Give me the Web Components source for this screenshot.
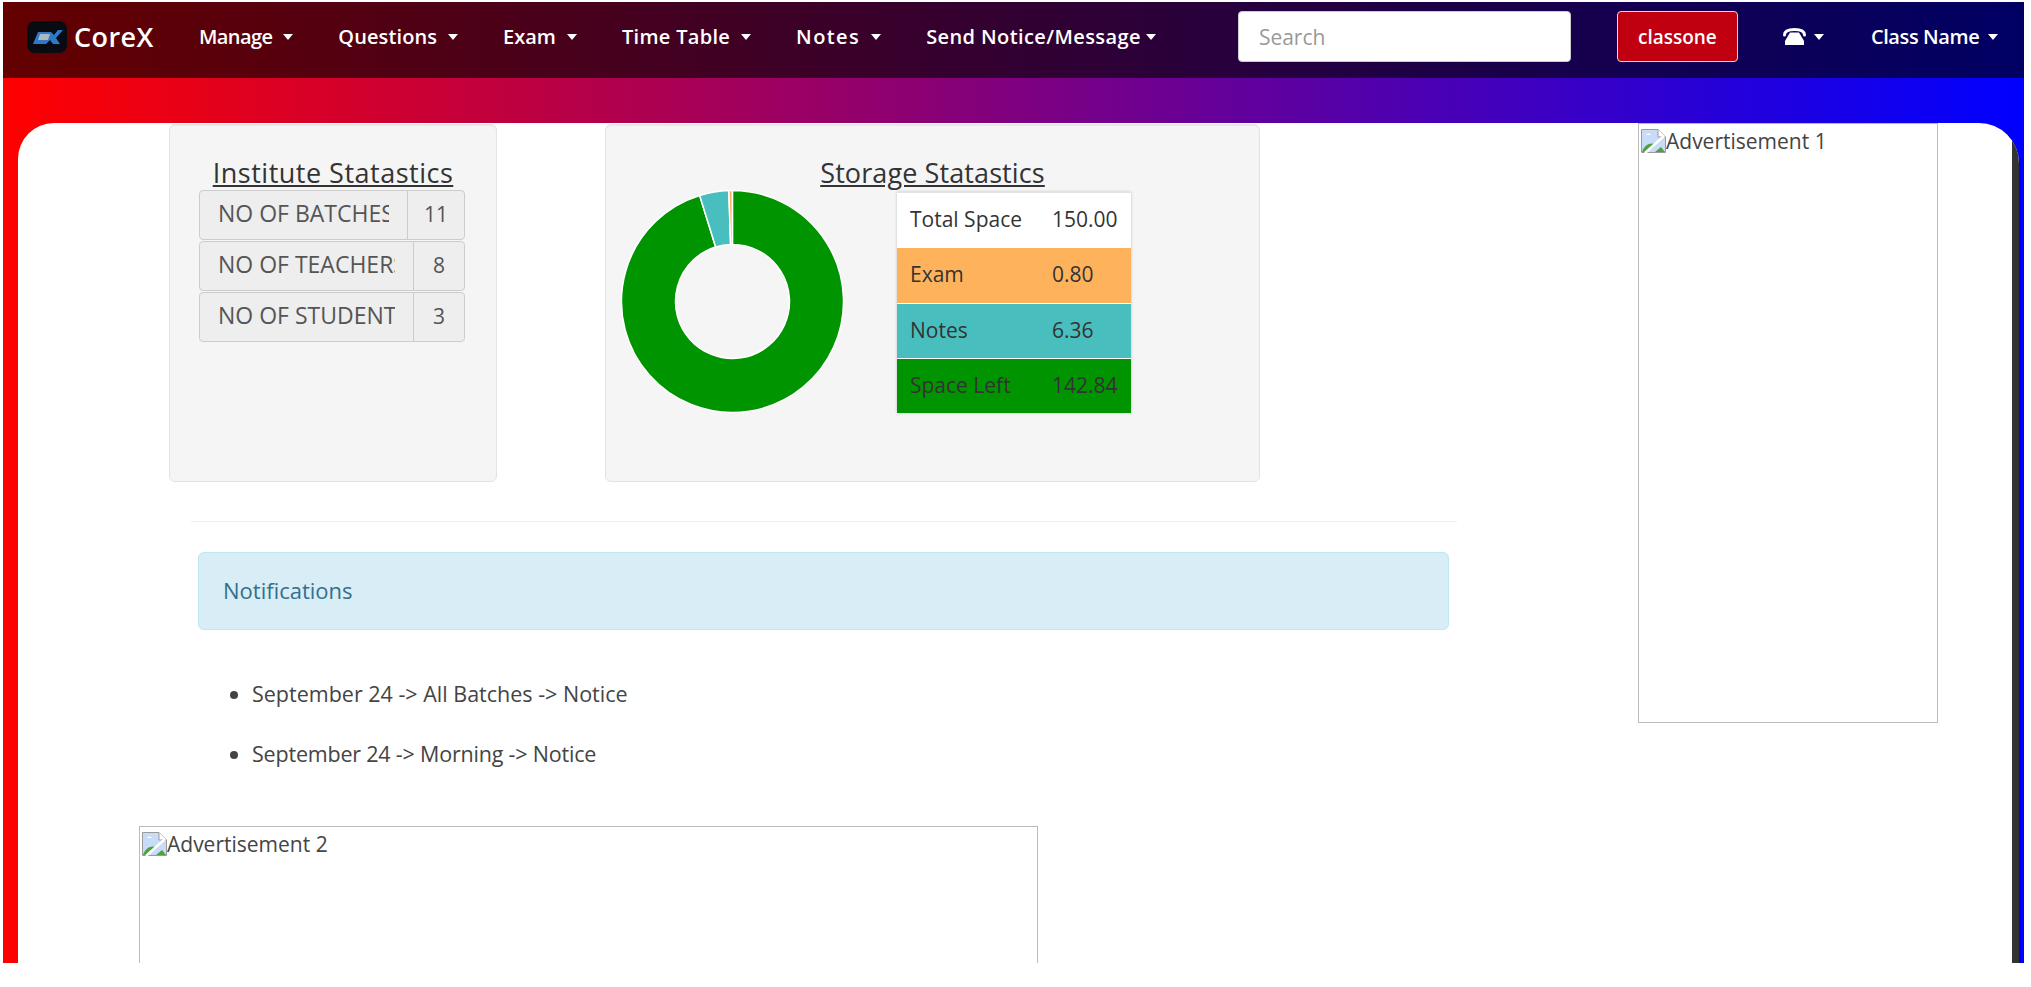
<!DOCTYPE html>
<html>
<head>
<meta charset="utf-8">
<title>CoreX</title>
<style>
html, body { margin: 0; height: 100%; background: #fff; overflow: hidden; }
body { padding: 2px 0 0 3px; box-sizing: border-box; font-family: "Open Sans", "Liberation Sans", sans-serif; color: #333; }
</style>
</head>
<body>
<app-shell>
  <top-nav slot="nav">
    <nav-item style="letter-spacing:-.6px">Manage</nav-item>
    <nav-item style="letter-spacing:.1px">Questions</nav-item>
    <nav-item>Exam</nav-item>
    <nav-item style="letter-spacing:.3px">Time Table</nav-item>
    <nav-item style="letter-spacing:1.4px">Notes</nav-item>
    <nav-item tight style="letter-spacing:.4px">Send Notice/Message</nav-item>
  </top-nav>

  <stat-card heading="Institute Statastics" style="--card-w:328px;--head-ls:.5px">
    <stat-row label="NO OF BATCHES" value="11" side="57"></stat-row>
    <stat-row label="NO OF TEACHERS" value="8" side="51"></stat-row>
    <stat-row label="NO OF STUDENTS" value="3" side="51"></stat-row>
  </stat-card>

  <stat-card slot="storage" heading="Storage Statastics" style="--card-w:655px;--head-ls:.1px">
    <storage-panel></storage-panel>
  </stat-card>

  <alert-box slot="below">Notifications</alert-box>
  <notice-list slot="below">
    <li>September 24 -&gt; All Batches -&gt; Notice</li>
    <li style="letter-spacing:-.2px">September 24 -&gt; Morning -&gt; Notice</li>
  </notice-list>
  <ad-box slot="below" label="Advertisement 2" style="--ad-w:899px;--ad-h:300px;--ad-ml:-59px"></ad-box>

  <ad-box slot="side" label="Advertisement 1" style="--ad-w:300px;--ad-h:600px"></ad-box>
</app-shell>

<script>
// page frame: gradient band with the white rounded panel on it
class AppShell extends HTMLElement {
  constructor() {
    super();
    this.attachShadow({mode: 'open'}).innerHTML = `
    <style>
    :host { display: block; width: 2021px; height: 961px; background: linear-gradient(to right, #f00, #00f); }
    .band { padding: 45px 5px 0 15px; height: 838px; }
    .panel { background: #fff; height: 840px; border-radius: 36px 40px 0 0; overflow: hidden; display: flex; }
    .main { width: 1487px; flex: none; padding-top: 1px; box-sizing: border-box; }
    .cards { display: flex; gap: 108px; padding-left: 151px; }
    hr { border: 0; border-top: 1px solid #eee; margin: 39px 0 30px 173px; width: 1266px; }
    .below { padding-left: 180px; }
    .side { margin-left: 133px; }
    .bar { margin-left: auto; width: 7px; background: #333; }
    </style>
    <slot name="nav"></slot>
    <div class="band">
      <div class="panel">
        <div class="main">
          <div class="cards"><slot></slot><slot name="storage"></slot></div>
          <hr>
          <div class="below"><slot name="below"></slot></div>
        </div>
        <div class="side"><slot name="side"></slot></div>
        <div class="bar"></div>
      </div>
    </div>`;
  }
}
customElements.define('app-shell', AppShell);

class TopNav extends HTMLElement {
  constructor() {
    super();
    this.attachShadow({mode: 'open'}).innerHTML = `
    <style>
    :host { display: flex; align-items: center; height: 76px; box-sizing: border-box; padding-bottom: 7px; background: linear-gradient(to right, #640000, #000064); color: #fff; font-size: 20px; font-weight: 600; }
    .brand { display: flex; align-items: center; gap: 7px; margin-left: 24px; font-size: 27px; letter-spacing: .4px; width: 172px; }
    .logo { width: 40px; height: 32px; }
    .items { display: flex; gap: 45px; }
    input { width: 333px; height: 51px; box-sizing: border-box; margin-left: 82px; border: 1px solid #ccc; border-radius: 4px; padding: 0 20px; font: inherit; font-size: 21px; font-weight: 400; background: #fff; }
    input::placeholder { color: #999; opacity: 1; }
    .btn { width: 121px; height: 51px; box-sizing: border-box; margin-left: 46px; display: flex; align-items: center; justify-content: center; background: #c00010; border: 1px solid #d9d9d9; border-radius: 4px; font-size: 19px; }
    .phone { margin-left: 45px; width: 88px; display: flex; align-items: center; gap: 8px; }
    .right { display: flex; align-items: center; gap: 9px; letter-spacing: -.4px; }
    .caret { width: 0; height: 0; border: 5px solid transparent; border-top: 6px solid #fff; border-bottom: 0; }
    </style>
    <div class="brand">
      <svg class="logo" viewBox="0 0 40 32">
        <rect width="40" height="32" rx="8" fill="#080b12"/>
        <path d="M6 23 L11 11 H24 L27 14 L31 9 H36 L29 17 L33 23 H26 L23 19 L19 23 Z" fill="#2f79c8"/>
        <path d="M13 13 H23 L21 19 H11 Z" fill="#aeb6c0"/>
      </svg>
      CoreX
    </div>
    <div class="items"><slot></slot></div>
    <input placeholder="Search" readonly>
    <div class="btn">classone</div>
    <div class="phone">
      <svg width="23" height="17" viewBox="0 0 23 17">
        <path d="M1.5 7 C1.5 2.5 6 1.5 11.5 1.5 C17 1.5 21.5 2.5 21.5 7" fill="none" stroke="#fff" stroke-width="3" stroke-linecap="round"/>
        <path d="M7 4.5 H16 L21 13 V17 H2 V13 Z" fill="#fff"/>
      </svg>
      <span class="caret"></span>
    </div>
    <div class="right">Class Name <span class="caret"></span></div>`;
  }
}
customElements.define('top-nav', TopNav);

class NavItem extends HTMLElement {
  constructor() {
    super();
    const gap = this.hasAttribute('tight') ? 5 : 11;
    this.attachShadow({mode: 'open'}).innerHTML = `
    <style>
    :host { display: flex; align-items: center; gap: ${gap}px; white-space: nowrap; }
    .caret { width: 0; height: 0; border: 5px solid transparent; border-top: 6px solid #fff; border-bottom: 0; }
    </style>
    <slot></slot><span class="caret"></span>`;
  }
}
customElements.define('nav-item', NavItem);

class StatCard extends HTMLElement {
  constructor() {
    super();
    this.attachShadow({mode: 'open'}).innerHTML = `
    <style>
    :host { display: block; width: var(--card-w); height: 358px; box-sizing: border-box; background: #f5f5f5; border: 1px solid #e3e3e3; border-radius: 6px; box-shadow: inset 0 1px 1px rgba(0,0,0,.05); padding: 32px 0 0; }
    h3 { margin: 0 0 2px; height: 31px; line-height: 31px; text-align: center; font-size: 27px; letter-spacing: var(--head-ls); font-weight: 400; text-decoration: underline; color: #333; }
    </style>
    <h3></h3>
    <slot></slot>`;
    this.shadowRoot.querySelector('h3').textContent = this.getAttribute('heading');
  }
}
customElements.define('stat-card', StatCard);

class StatRow extends HTMLElement {
  constructor() {
    super();
    this.attachShadow({mode: 'open'}).innerHTML = `
    <style>
    :host { display: flex; width: 266px; height: 50px; margin: 0 0 1px 29px; box-sizing: border-box; border: 1px solid #ccc; border-radius: 4px; background: #eee; color: #555; font-size: 23px; }
    .label { flex: 1; min-width: 0; margin: 0 18px; overflow: hidden; white-space: nowrap; line-height: 44px; }
    .value { border-left: 1px solid #ccc; display: flex; align-items: center; justify-content: center; box-sizing: border-box; font-size: 21px; padding-bottom: 2px; }
    </style>
    <div class="label"></div>
    <div class="value"></div>`;
    this.shadowRoot.querySelector('.label').textContent = this.getAttribute('label');
    const v = this.shadowRoot.querySelector('.value');
    v.textContent = this.getAttribute('value');
    v.style.width = this.getAttribute('side') + 'px';
  }
}
customElements.define('stat-row', StatRow);

class StoragePanel extends HTMLElement {
  constructor() {
    super();
    // angles in degrees, clockwise from the top
    const seg = (a, b, c) => {
      const p = (r, d) => {
        const t = (d - 90) * Math.PI / 180;
        return (111.5 + r * Math.cos(t)).toFixed(2) + ' ' + (111.5 + r * Math.sin(t)).toFixed(2);
      };
      const big = b - a > 180 ? 1 : 0;
      return `<path d="M${p(111,a)} A111 111 0 ${big} 1 ${p(111,b)} L${p(57,b)} A57 57 0 ${big} 0 ${p(57,a)} Z" fill="${c}" stroke="#fff" stroke-width="1.5"/>`;
    };
    this.attachShadow({mode: 'open'}).innerHTML = `
    <style>
    :host { display: flex; padding-left: 15px; }
    svg { width: 223px; height: 223px; flex: none; }
    .table { margin: 2px 0 0 53px; width: 234px; height: 221px; background: #fff; box-shadow: 0 0 3px rgba(0,0,0,.2); font-size: 21px; display: grid; grid-auto-rows: 1fr; row-gap: 1px; border-top: 1px solid #e4e4e4; box-sizing: border-box; }
    .r { display: grid; grid-template-columns: 142px 1fr; align-items: center; padding: 0 0 2px 13px; white-space: nowrap; }
    </style>
    <svg viewBox="0 0 223 223">${seg(0, 342.8, '#009400')}${seg(342.8, 358.1, '#48bfbe')}${seg(358.1, 359.9, '#ffb25c')}</svg>
    <div class="table">
      <div class="r" style="background:#fff"><span>Total Space</span><span>150.00</span></div>
      <div class="r" style="background:#ffb25c"><span>Exam</span><span>0.80</span></div>
      <div class="r" style="background:#48bfbe"><span>Notes</span><span>6.36</span></div>
      <div class="r" style="background:#009400"><span>Space Left</span><span>142.84</span></div>
    </div>`;
  }
}
customElements.define('storage-panel', StoragePanel);

class AlertBox extends HTMLElement {
  constructor() {
    super();
    this.attachShadow({mode: 'open'}).innerHTML = `
    <style>
    :host { display: flex; align-items: center; width: 1251px; height: 78px; box-sizing: border-box; padding: 0 0 2px 24px; background: #d9edf7; border: 1px solid #bce8f1; border-radius: 6px; color: #31708f; font-size: 22px; }
    </style>
    <slot></slot>`;
  }
}
customElements.define('alert-box', AlertBox);

class NoticeList extends HTMLElement {
  constructor() {
    super();
    this.attachShadow({mode: 'open'}).innerHTML = `
    <style>
    :host { display: block; height: 196px; padding: 34px 0 0 54px; box-sizing: border-box; font-size: 21.5px; color: #444; }
    ::slotted(li) { height: 60px; line-height: 60px; }
    </style>
    <slot></slot>`;
  }
}
customElements.define('notice-list', NoticeList);

// stands in for an image that did not load: broken-image mark, alt text, thin frame
class AdBox extends HTMLElement {
  constructor() {
    super();
    this.attachShadow({mode: 'open'}).innerHTML = `
    <style>
    :host { display: block; width: var(--ad-w); height: var(--ad-h); margin-left: var(--ad-ml, 0); box-sizing: border-box; border: 1px solid #bbb; font-size: 21px; color: #444; }
    .row { display: flex; align-items: center; padding: 4px 0 0 2px; height: 26px; }
    svg { flex: none; width: 25px; height: 24px; }
    </style>
    <div class="row">
      <svg viewBox="0 0 25 24">
        <path d="M.5 .5 H17 L24.5 8 V23.5 H.5 Z" fill="#c9dcf7" stroke="#9a9a9a"/>
        <path d="M17 .5 V8 H24.5" fill="#fff" stroke="#9a9a9a"/>
        <path d="M5 6 a2 1.2 0 0 1 5 0 Z" fill="#fff"/>
        <path d="M1 23 C3 16 9 13 14 15 L6 23 Z M14 23 L20 18 L24 23 Z" fill="#4ca33a"/>
        <path d="M4 24 L23 7" stroke="#fff" stroke-width="2.5"/>
      </svg>
      <span></span>
    </div>`;
    this.shadowRoot.querySelector('span').textContent = this.getAttribute('label');
  }
}
customElements.define('ad-box', AdBox);
</script>
</body>
</html>
